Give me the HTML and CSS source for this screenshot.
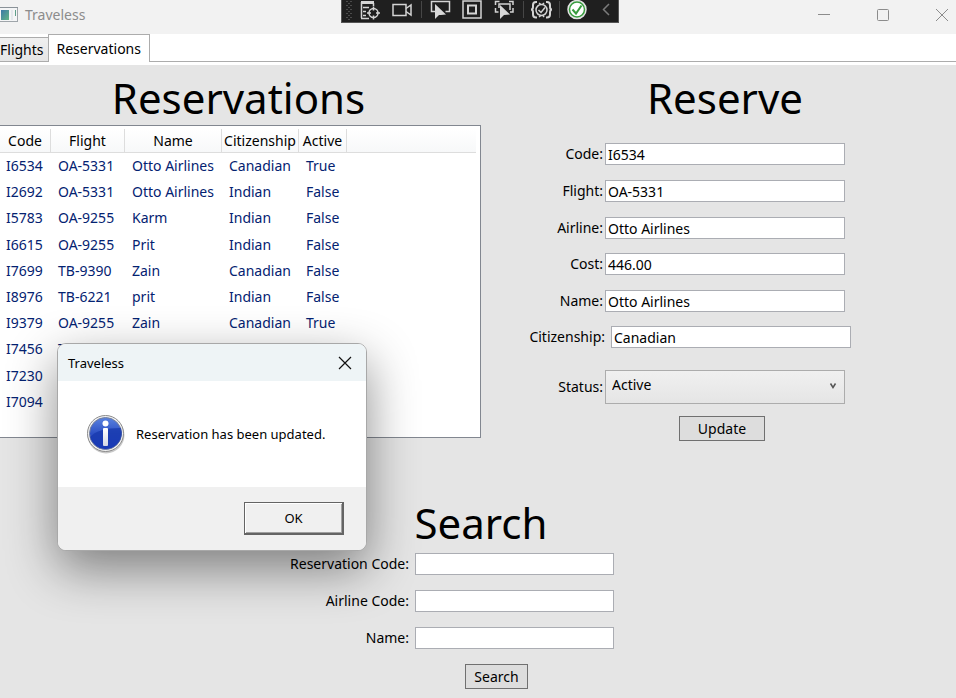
FILE: index.html
```html
<!DOCTYPE html>
<html lang="en">
<head>
<meta charset="utf-8">
<meta name="viewport" content="width=device-width, initial-scale=1">
<title>Traveless</title>
<link rel="stylesheet" href="styles.css">
</head>
<body>
<header class="titlebar">
  <svg class="app-icon" width="18" height="16" viewBox="0 0 18 16" aria-hidden="true">
    <defs><linearGradient id="app" x1="0" y1="0" x2="1" y2="1"><stop offset="0" stop-color="#3b78a8"/><stop offset="1" stop-color="#62b584"/></linearGradient></defs>
    <rect x="-2" y=".5" width="19.500" height="14" fill="#f4f5f6" stroke="#9fa5aa"/>
    <path d="M0 .5h18" stroke="#8a9298"/>
    <rect x="1" y="3" width="8" height="10" fill="url(#app)"/>
    <rect x="11" y="3" width="2" height="10" fill="#e4e8ec"/>
    <path d="M15.500 3v6" stroke="#5fa08a"/>
  </svg>
  <span class="app-name">Traveless</span>
  <div class="window-buttons">
    <button type="button" aria-label="Minimize"><svg width="14" height="14" viewBox="0 0 14 14"><path d="M1 6.500h12"/></svg></button>
    <button type="button" aria-label="Maximize"><svg width="14" height="14" viewBox="0 0 14 14"><rect x="1.500" y="1.500" width="11" height="11" rx="1"/></svg></button>
    <button type="button" aria-label="Close"><svg width="14" height="14" viewBox="0 0 14 14"><path d="M1 1l12 12M13 1L1 13"/></svg></button>
  </div>
</header>

<div class="debugbar" role="toolbar" aria-label="Debug tools">
  <svg width="276" height="22" viewBox="0 0 276 22" fill="none" stroke="#d4d4d4" stroke-width="1.500" aria-hidden="true">
    <path d="M5 1v20M9 1v20" stroke="#5c5c5c" stroke-dasharray="1 3"/>
    <path d="M7 3v18" stroke="#5c5c5c" stroke-dasharray="1 3"/>
    <path d="M19 2.500h13" stroke-width="3"/>
    <path d="M19.500 2v16M31.500 3v3M21 7.500h6M21 11.500h3M21 15.500h3M19 18.500h8"/>
    <circle cx="31.500" cy="13" r="4.500"/><path d="M31.500 6.500v4M31.500 15.500v4M25 13h4M34 13h4"/>
    <rect x="51" y="4.500" width="13" height="11"/><path d="M64 8.500l5-3.500v10l-5-3.500"/>
    <path d="M79.500 1v17M181.500 1v17M217.500 1v17" stroke="#464646" stroke-width="1"/>
    <path d="M93 11.500h-3.500V1.500h18v10h-4"/><path d="M93 4v15l4-4 2 0 5-.5z" fill="#d8d8d8" stroke="none"/>
    <rect x="121" y="1" width="18" height="17"/><rect x="126" y="5.500" width="8" height="8" stroke-width="2"/>
    <path d="M153.500 5V1.500h4M167 1.500h4V5M153.500 8v4h3M171 8v4h-3"/><path d="M157 8V4h11v6"/><path d="M158 5v14l4-4 6-.5z" fill="#d8d8d8" stroke="none"/>
    <path d="M195 2h-1q-3 0-3 3v2q0 2.500-2 2.500 2 0 2 3v2q0 3 3 3h1M204 2h1q3 0 3 3v2q0 2.500 2 2.500-2 0-2 3v2q0 3-3 3h-1" stroke-width="2"/>
    <circle cx="199.500" cy="10" r="5.500"/><path d="M196.500 10l2.500 2.500 4-5"/><path d="M197 3l2 1.500M202 3l-1.500 1.500M197 17l2-1.500M202 17l-1-1.500"/>
    <circle cx="235" cy="9.500" r="9" fill="#f3f7f3" stroke="#e3e3e3"/><circle cx="235" cy="9.500" r="7.500" fill="#fff" stroke="#379b3d"/><path d="M230.500 9.500l3.500 4 5.500-8" stroke="#379b3d" stroke-width="2"/>
    <path d="M267 4l-5.500 5.500 5.500 5.500" stroke="#7b7b7b"/>
  </svg>
</div>

<nav class="tabs" role="tablist">
  <button type="button" class="tab" role="tab" aria-selected="false">Flights</button>
  <button type="button" class="tab tab-active" role="tab" aria-selected="true">Reservations</button>
</nav>

<main class="page">
  <div class="columns">
    <section>
      <h1 class="heading">Reservations</h1>
      <div class="listbox">
        <table class="reservations">
          <colgroup><col class="c-code"><col class="c-flight"><col class="c-name"><col class="c-citizen"><col class="c-active"><col></colgroup>
          <thead><tr><th>Code</th><th>Flight</th><th>Name</th><th>Citizenship</th><th>Active</th><td></td></tr></thead>
          <tbody>
            <tr><td>I6534</td><td>OA-5331</td><td>Otto Airlines</td><td>Canadian</td><td>True</td><td></td></tr>
            <tr><td>I2692</td><td>OA-5331</td><td>Otto Airlines</td><td>Indian</td><td>False</td><td></td></tr>
            <tr><td>I5783</td><td>OA-9255</td><td>Karm</td><td>Indian</td><td>False</td><td></td></tr>
            <tr><td>I6615</td><td>OA-9255</td><td>Prit</td><td>Indian</td><td>False</td><td></td></tr>
            <tr><td>I7699</td><td>TB-9390</td><td>Zain</td><td>Canadian</td><td>False</td><td></td></tr>
            <tr><td>I8976</td><td>TB-6221</td><td>prit</td><td>Indian</td><td>False</td><td></td></tr>
            <tr><td>I9379</td><td>OA-9255</td><td>Zain</td><td>Canadian</td><td>True</td><td></td></tr>
            <tr><td>I7456</td><td>T</td><td></td><td></td><td></td><td></td></tr>
            <tr><td>I7230</td><td></td><td></td><td></td><td></td><td></td></tr>
            <tr><td>I7094</td><td></td><td></td><td></td><td></td><td></td></tr>
          </tbody>
        </table>
      </div>
    </section>

    <section>
      <h2 class="heading heading-reserve">Reserve</h2>
      <form class="reserve">
        <div class="field"><label for="r-code">Code:</label><input id="r-code" type="text" value="I6534"></div>
        <div class="field"><label for="r-flight">Flight:</label><input id="r-flight" type="text" value="OA-5331"></div>
        <div class="field"><label for="r-airline">Airline:</label><input id="r-airline" type="text" value="Otto Airlines"></div>
        <div class="field field-near"><label for="r-cost">Cost:</label><input id="r-cost" type="text" value="446.00"></div>
        <div class="field"><label for="r-name">Name:</label><input id="r-name" type="text" value="Otto Airlines"></div>
        <div class="field field-near field-citizen"><label for="r-citizen">Citizenship:</label><input id="r-citizen" type="text" value="Canadian"></div>
        <div class="field field-status"><label for="r-status">Status:</label>
          <span class="combo"><select id="r-status"><option>Active</option></select>
          <svg class="chevron" width="8" height="8" viewBox="0 0 8 8" aria-hidden="true"><path d="M1.500 1.500L4 5.500l2.500-4" fill="none" stroke="#555" stroke-width="1.500"/></svg></span>
        </div>
        <button type="button" class="btn btn-update">Update</button>
      </form>
    </section>
  </div>

  <section class="search">
    <h2 class="heading heading-search">Search</h2>
    <form class="search-form">
      <div class="search-field"><label for="s-code">Reservation Code:</label><input id="s-code" type="text"></div>
      <div class="search-field"><label for="s-airline">Airline Code:</label><input id="s-airline" type="text"></div>
      <div class="search-field"><label for="s-name">Name:</label><input id="s-name" type="text"></div>
      <button type="button" class="btn btn-search">Search</button>
    </form>
  </section>
</main>

<div class="dialog" role="dialog" aria-labelledby="dialog-title">
  <div class="dialog-head">
    <span id="dialog-title">Traveless</span>
    <button type="button" class="dialog-close" aria-label="Close"><svg width="14" height="14" viewBox="0 0 14 14"><path d="M1 1l12 12M13 1L1 13" stroke="#111" stroke-width="1.200"/></svg></button>
  </div>
  <div class="dialog-body">
    <svg width="40" height="40" viewBox="0 0 40 40" aria-hidden="true">
      <defs>
        <linearGradient id="ball" x1="0" y1="0" x2="0" y2="1"><stop offset="0" stop-color="#5a83e0"/><stop offset=".5" stop-color="#2d50c4"/><stop offset="1" stop-color="#2440d2"/></linearGradient>
        <linearGradient id="stem" x1="0" y1="0" x2="0" y2="1"><stop offset="0" stop-color="#fff"/><stop offset="1" stop-color="#d5d8e4"/></linearGradient>
      </defs>
      <circle cx="20" cy="21" r="18.500" fill="#c9c9c9"/>
      <circle cx="19.500" cy="19.500" r="18" fill="#f1f1f1" stroke="#8b8b8b"/>
      <circle cx="19.500" cy="19.500" r="16" fill="url(#ball)" stroke="#75809c"/>
      <path d="M4 23Q12 14 35 14A16 16 0 0 1 33 28Q28 35 19.500 35 8 34 4 23z" fill="#1738ac" opacity=".75"/>
      <circle cx="19.500" cy="9.500" r="3" fill="#fff"/>
      <rect x="17" y="14" width="5" height="18" rx="1" fill="url(#stem)"/>
    </svg>
    <p>Reservation has been updated.</p>
  </div>
  <div class="dialog-foot"><button type="button" class="ok">OK</button></div>
</div>
</body>
</html>
```
FILE: styles.css
```css
* { box-sizing: border-box; }

body {
  margin: 0;
  min-height: 100vh;
  display: flex;
  flex-direction: column;
  background: #fff;
  color: #000;
  font-family: "Noto Sans", "Open Sans", sans-serif;
  font-size: 14px;
  line-height: 20px;
}

button, input, select { font: inherit; color: inherit; margin: 0; }

.titlebar {
  display: flex;
  align-items: center;
  height: 34px;
  padding-bottom: 4px;
  background: #f2f2f2;
  color: #8c8c8c;
}
.app-name { margin-left: 7px; }
.window-buttons { display: flex; gap: 45px; margin-left: auto; padding-right: 7px; }
.window-buttons button, .dialog-close { display: flex; padding: 0; border: 0; background: none; }
.window-buttons path, .window-buttons rect { fill: none; stroke: #8c8c8c; }

.debugbar {
  position: absolute;
  top: 0;
  left: 50%;
  margin-left: -137px;
  background: #1f1f1f;
  border: 1px solid #555;
  border-top: 0;
}
.debugbar svg { display: block; }

.tabs {
  display: flex;
  align-items: flex-end;
  height: 28px;
  border-bottom: 1px solid #acacac;
}
.tab {
  height: 24px;
  padding: 0 4px 0 0;
  border: 1px solid #acacac;
  border-width: 1px 0 0;
  background: linear-gradient(#f0f0f0, #e5e5e5);
}
.tab-active {
  height: 28px;
  margin-bottom: -1px;
  padding: 0 8px;
  border-width: 1px 1px 0;
  background: #fff;
}

.page { flex: 1; margin-top: 3px; background: #e5e5e5; }
.columns { display: grid; grid-template-columns: 481fr 475fr; }

.heading {
  margin: 0;
  height: 60px;
  font-size: 42px;
  font-weight: 400;
  line-height: 66px;
  padding-right: 4px;
  text-align: center;
}
.heading-reserve { padding: 0 0 0 13px; }

.listbox {
  height: 313px;
  padding: 3px 4px 0 0;
  border: 1px solid #828790;
  border-left: 0;
  background: #fff;
}
.reservations {
  width: 100%;
  height: 286px;
  table-layout: fixed;
  border-collapse: separate;
  border-spacing: 0;
  white-space: nowrap;
}
.c-code { width: 51px; }
.c-flight { width: 74px; }
.c-name { width: 97px; }
.c-citizen { width: 77px; }
.c-active { width: 48px; }
.reservations th, .reservations thead td {
  height: 24px;
  padding: 0;
  border-bottom: 1px solid #ddd;
  background: linear-gradient(#fff, #f7f8f9);
  font-weight: 400;
}
.reservations th { border-right: 1px solid #ddd; }
.reservations tbody td { padding: 0 0 0 7px; color: #042271; }
.reservations tbody td:first-child { padding-left: 6px; }

.reserve {
  display: flex;
  flex-direction: column;
  padding: 18px 111px 0 0;
}
.field { display: flex; justify-content: flex-end; align-items: center; margin-bottom: 15px; }
.field-near { margin-top: -1px; }
.field label { margin-right: 2px; }
.field input, .search-field input {
  height: 22px;
  padding: 0 2px;
  border: 1px solid #abadb3;
  background: #fff;
}
.field input, .combo { width: 240px; }
.field-citizen { margin-right: -6px; }
.field-citizen label { margin-right: 6px; }
.field-status { margin: 7px 0 12px; }
.combo { position: relative; display: flex; }
.combo select {
  width: 100%;
  height: 34px;
  padding: 0 6px 4px;
  appearance: none;
  border: 1px solid #acacac;
  border-radius: 0;
  background: linear-gradient(#f0f0f0, #e5e5e5);
}
.chevron { position: absolute; right: 8px; top: 12px; }

.btn {
  height: 25px;
  padding: 0;
  border: 1px solid #707070;
  background: #ddd;
}
.btn-update { width: 86px; align-self: flex-end; margin-right: 80px; }

.search { margin-top: 49px; }
.heading-search { height: 63px; padding: 0 0 0 6px; }
.search-form { display: flex; flex-direction: column; align-items: center; padding-bottom: 10px; }
.search-field {
  display: grid;
  grid-template-columns: 1fr 199px 1fr;
  column-gap: 6px;
  align-items: center;
  width: 100%;
  margin-bottom: 15px;
  padding-left: 73px;
}
.search-field label { text-align: right; }
.btn-search { width: 63px; margin-left: 37px; }

.dialog {
  position: absolute;
  left: 57px;
  top: 343px;
  width: 310px;
  border: 1px solid #a8a8a8;
  border-radius: 9px;
  overflow: hidden;
  background: #fff;
  box-shadow: 0 18px 50px rgba(0, 0, 0, .45);
  font-size: 13px;
}
.dialog-head {
  display: flex;
  align-items: center;
  justify-content: space-between;
  height: 37px;
  padding: 0 14px 0 10px;
  background: #eef4f6;
}
.dialog-body { display: flex; align-items: center; gap: 10px; height: 106px; padding: 0 28px; white-space: nowrap; }
.dialog-body p { margin: 0; }
.dialog-foot { display: flex; justify-content: flex-end; padding: 15px 22px; background: #f0f0f0; }
.ok {
  width: 100px;
  height: 33px;
  padding: 0;
  border: 1px solid #646464;
  border-width: 1px 2px 2px 1px;
  background: #f0f0f0;
  box-shadow: inset 1px 1px #fff, inset -1px -1px #a0a0a0;
}
```
